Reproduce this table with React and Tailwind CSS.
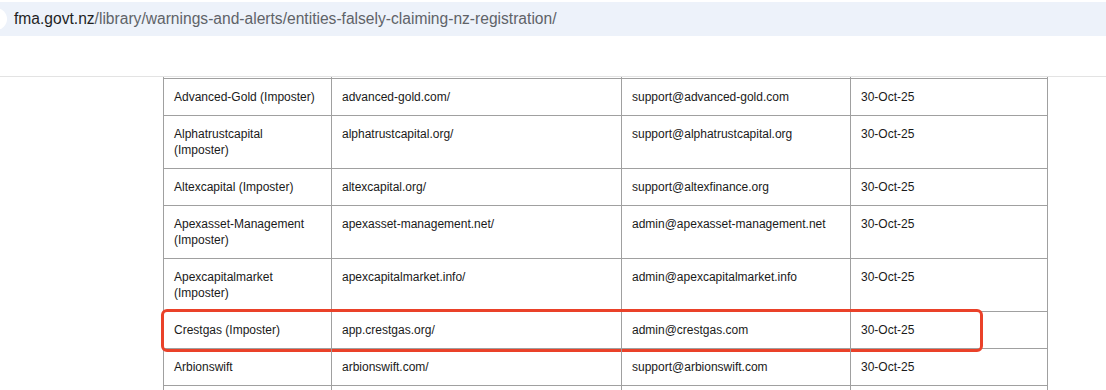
const rows = [
  { name: ['Advanced-Gold (Imposter)'], site: 'advanced-gold.com/', email: 'support@advanced-gold.com', date: '30-Oct-25' },
  { name: ['Alphatrustcapital', '(Imposter)'], site: 'alphatrustcapital.org/', email: 'support@alphatrustcapital.org', date: '30-Oct-25' },
  { name: ['Altexcapital (Imposter)'], site: 'altexcapital.org/', email: 'support@altexfinance.org', date: '30-Oct-25' },
  { name: ['Apexasset-Management', '(Imposter)'], site: 'apexasset-management.net/', email: 'admin@apexasset-management.net', date: '30-Oct-25' },
  { name: ['Apexcapitalmarket', '(Imposter)'], site: 'apexcapitalmarket.info/', email: 'admin@apexcapitalmarket.info', date: '30-Oct-25' },
  { name: ['Crestgas (Imposter)'], site: 'app.crestgas.org/', email: 'admin@crestgas.com', date: '30-Oct-25', marked: true },
  { name: ['Arbionswift'], site: 'arbionswift.com/', email: 'support@arbionswift.com', date: '30-Oct-25' },
  { name: [''], site: '', email: '', date: '' },
];

const cols = ['w-[168px]', 'w-[290px]', 'w-[229px]', 'w-[197px]'];

function Row({ row }) {
  const cells = [
    row.name.map((line, i) => <div key={i}>{line}</div>),
    row.site,
    row.email,
    row.date,
  ];
  return (
    <div className="relative flex border-b border-[#a0a0a0]">
      {cells.map((c, i) => (
        <div key={i} className={`${cols[i]} shrink-0 border-r border-[#a0a0a0] p-[10px] leading-4`}>
          {c}
        </div>
      ))}
      {row.marked && (
        <div className="pointer-events-none absolute -left-[3px] -top-[3px] h-[43px] w-[822px] rounded-[6px] border-[3px] border-[#ea4129]" />
      )}
    </div>
  );
}

export default function App() {
  return (
    <div className="h-[390px] w-[1106px] overflow-hidden bg-white">
      {/* address bar */}
      <div className="pt-[2px]">
        <div className="relative flex h-[34px] items-center bg-[#edf2fa] pl-[14px] font-['Liberation_Sans',Arial,sans-serif] text-[15.6px]">
          <div className="absolute -left-[15px] top-[6px] h-[22px] w-[22px] rounded-full bg-white" />
          <span className="text-[#1f1f1f]">fma.govt.nz</span>
          <span className="text-[#5f6368]">/library/warnings-and-alerts/entities-falsely-claiming-nz-registration/</span>
        </div>
      </div>
      <div className="h-[40px]" />
      <div className="border-t border-[#e3e3e3]" />

      {/* table, scrolled part way */}
      <div className="pl-[163px] font-['Liberation_Sans',Arial,sans-serif] text-[12px] text-[#1a1a1a]">
        <div className="w-[885px] border-l border-[#a0a0a0]">
          <div className="flex h-[2px] border-b border-[#a0a0a0]">
            {cols.map((c, i) => (
              <div key={i} className={`${c} shrink-0 border-r border-[#a0a0a0]`} />
            ))}
          </div>
          {rows.map((r, i) => (
            <Row key={i} row={r} />
          ))}
        </div>
      </div>
    </div>
  );
}
